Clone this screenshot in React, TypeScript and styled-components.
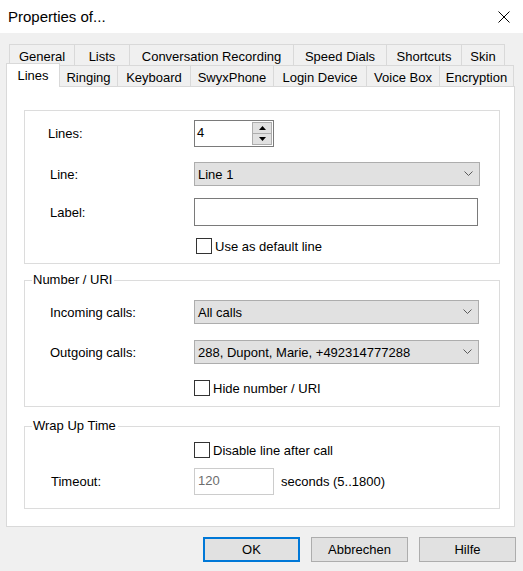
import styled, { createGlobalStyle } from 'styled-components';

const GlobalStyle = createGlobalStyle`
	html, body {
		margin: 0;
		padding: 0;
		background: #f0f0f0;
	}
	body {
		font-family: "Liberation Sans", Arial, sans-serif;
		font-size: 13px;
		color: #000;
	}
	* {
		box-sizing: border-box;
	}
`

const Window = styled.div`
	width: 523px;
	height: 571px;
	background: #f0f0f0;
	display: flex;
	flex-direction: column;
	overflow: hidden;
`

const TitleBar = styled.div`
	height: 33px;
	flex-shrink: 0;
	background: #fff;
	display: flex;
	align-items: center;
	justify-content: space-between;
	padding: 0 13px 0 8px;
	font-size: 15px;
`

const CloseButton = styled.div`
	display: flex;
	align-items: center;
`

const TabArea = styled.div`
	margin-top: 11px;
	display: flex;
	flex-direction: column;
`

const TabRow = styled.div<{ $indent: number }>`
	display: flex;
	height: 21px;
	padding-left: ${(props) => props.$indent}px;
`

const Tab = styled.div<{ $w: number; $active?: boolean }>`
	width: ${(props) => props.$w}px;
	height: ${(props) => (props.$active ? '24px' : '21px')};
	margin-top: ${(props) => (props.$active ? '-2px' : '0')};
	margin-right: -1px;
	border: 1px solid #d9d9d9;
	border-bottom: none;
	background: ${(props) => (props.$active ? '#fff' : '#f0f0f0')};
	display: flex;
	align-items: center;
	justify-content: center;
	padding-top: ${(props) => (props.$active ? '0' : '2px')};
	white-space: nowrap;
	position: relative;
	z-index: ${(props) => (props.$active ? 2 : 1)};
`

const Panel = styled.div`
	margin: 0 8px 0 6px;
	height: 441px;
	background: #fff;
	border: 1px solid #d9d9d9;
	padding: 23px 14px 0 17px;
	display: flex;
	flex-direction: column;
`

const Group = styled.div<{ $top: number; $bottom: number }>`
	position: relative;
	margin-top: ${(props) => props.$top}px;
	padding: 0 0 ${(props) => props.$bottom}px 25px;
	border: 1px solid #dcdcdc;
	display: flex;
	flex-direction: column;
`

const Caption = styled.div`
	position: absolute;
	top: -9px;
	left: 7px;
	padding: 0 2px 0 1px;
	background: #fff;
	line-height: 16px;
`

const Row = styled.div<{ $top: number; $h: number }>`
	display: flex;
	align-items: center;
	margin-top: ${(props) => props.$top}px;
	height: ${(props) => props.$h}px;
`

const Label = styled.div<{ $shift?: number }>`
	width: 144px;
	flex-shrink: 0;
	margin-left: ${(props) => props.$shift ?? 0}px;
	margin-right: ${(props) => -(props.$shift ?? 0)}px;
`

const SpinBox = styled.div`
	width: 80px;
	height: 27px;
	border: 1px solid #7a7a7a;
	display: flex;
	justify-content: space-between;
	padding: 1px;
`

const SpinValue = styled.div`
	padding: 3px 0 0 1px;
`

const SpinButtons = styled.div`
	width: 20px;
	display: flex;
	flex-direction: column;
`

const SpinButton = styled.div`
	flex: 1;
	background: #e1e1e1;
	border: 1px solid #adadad;
	display: flex;
	align-items: center;
	justify-content: center;
	& + & {
		border-top: none;
	}
`

const Combo = styled.div<{ $w: number }>`
	width: ${(props) => props.$w}px;
	height: 100%;
	background: #e1e1e1;
	border: 1px solid #adadad;
	display: flex;
	align-items: center;
	justify-content: space-between;
	padding: 0 6px 0 3px;
	white-space: nowrap;
`

const TextField = styled.div<{ $w: number; $disabled?: boolean }>`
	width: ${(props) => props.$w}px;
	height: 100%;
	background: #fff;
	border: 1px solid ${(props) => (props.$disabled ? '#cccccc' : '#7a7a7a')};
	color: ${(props) => (props.$disabled ? '#6d6d6d' : '#000')};
	padding: 4px 0 0 3px;
`

const CheckRow = styled.div<{ $shift?: number }>`
	display: flex;
	align-items: center;
	margin-left: ${(props) => props.$shift ?? 0}px;
`

const CheckBox = styled.div`
	width: 16px;
	height: 16px;
	border: 1px solid #333;
	background: #fff;
	margin-right: 3px;
`

const Unit = styled.div`
	margin-left: 7px;
`

const ButtonBar = styled.div`
	display: flex;
	justify-content: flex-end;
	gap: 11px;
	padding: 10px 7px 0 0;
`

const Button = styled.div<{ $default?: boolean }>`
	width: 97px;
	height: 25px;
	background: #e1e1e1;
	border: ${(props) => (props.$default ? '2px solid #0078d7' : '1px solid #adadad')};
	display: flex;
	align-items: center;
	justify-content: center;
`

const Chevron = () => (
	<svg width="9" height="6" viewBox="0 0 9 6">
		<polyline points="0.5,0.5 4.5,4.5 8.5,0.5" fill="none" stroke="#5a5a5a" strokeWidth="1" />
	</svg>
)

const Arrow = ({ up }: { up?: boolean }) => (
	<svg width="7" height="4" viewBox="0 0 7 4">
		<polygon points={up ? '0,4 7,4 3.5,0' : '0,0 7,0 3.5,4'} fill="#000" />
	</svg>
)

const topTabs = [
	{ label: 'General', w: 66 },
	{ label: 'Lists', w: 56 },
	{ label: 'Conversation Recording', w: 165 },
	{ label: 'Speed Dials', w: 94 },
	{ label: 'Shortcuts', w: 76 },
	{ label: 'Skin', w: 44 },
]

const bottomTabs = [
	{ label: 'Lines', w: 54, active: true },
	{ label: 'Ringing', w: 59 },
	{ label: 'Keyboard', w: 74 },
	{ label: 'SwyxPhone', w: 84 },
	{ label: 'Login Device', w: 94 },
	{ label: 'Voice Box', w: 74 },
	{ label: 'Encryption', w: 75 },
]

function App() {
	return (
		<Window>
			<GlobalStyle />
			<TitleBar>
				<span>Properties of...</span>
				<CloseButton>
					<svg width="12" height="12" viewBox="0 0 12 12">
						<path d="M0.5 0.5 L11.5 11.5 M11.5 0.5 L0.5 11.5" stroke="#000" strokeWidth="1" />
					</svg>
				</CloseButton>
			</TitleBar>

			<TabArea>
				<TabRow $indent={9}>
					{topTabs.map((t) => (
						<Tab key={t.label} $w={t.w}>{t.label}</Tab>
					))}
				</TabRow>
				<TabRow $indent={6}>
					{bottomTabs.map((t) => (
						<Tab key={t.label} $w={t.w} $active={t.active}>{t.label}</Tab>
					))}
				</TabRow>
			</TabArea>

			<Panel>
				<Group $top={0} $bottom={9}>
					<Row $top={9} $h={27}>
						<Label $shift={-2}>Lines:</Label>
						<SpinBox>
							<SpinValue>4</SpinValue>
							<SpinButtons>
								<SpinButton><Arrow up /></SpinButton>
								<SpinButton><Arrow /></SpinButton>
							</SpinButtons>
						</SpinBox>
					</Row>
					<Row $top={15} $h={24}>
						<Label>Line:</Label>
						<Combo $w={286}>
							<span>Line 1</span>
							<Chevron />
						</Combo>
					</Row>
					<Row $top={12} $h={28}>
						<Label>Label:</Label>
						<TextField $w={284} />
					</Row>
					<Row $top={12} $h={16}>
						<Label />
						<CheckRow $shift={2}>
							<CheckBox />
							<span>Use as default line</span>
						</CheckRow>
					</Row>
				</Group>

				<Group $top={16} $bottom={10}>
					<Caption>Number / URI</Caption>
					<Row $top={19} $h={24}>
						<Label>Incoming calls:</Label>
						<Combo $w={285}>
							<span>All calls</span>
							<Chevron />
						</Combo>
					</Row>
					<Row $top={16} $h={24}>
						<Label>Outgoing calls:</Label>
						<Combo $w={285}>
							<span>288, Dupont, Marie, +492314777288</span>
							<Chevron />
						</Combo>
					</Row>
					<Row $top={16} $h={16}>
						<Label />
						<CheckRow>
							<CheckBox />
							<span>Hide number / URI</span>
						</CheckRow>
					</Row>
				</Group>

				<Group $top={19} $bottom={13}>
					<Caption>Wrap Up Time</Caption>
					<Row $top={15} $h={16}>
						<Label />
						<CheckRow>
							<CheckBox />
							<span>Disable line after call</span>
						</CheckRow>
					</Row>
					<Row $top={10} $h={27}>
						<Label $shift={1}>Timeout:</Label>
						<TextField $w={80} $disabled>120</TextField>
						<Unit>seconds (5..1800)</Unit>
					</Row>
				</Group>
			</Panel>

			<ButtonBar>
				<Button $default>OK</Button>
				<Button>Abbrechen</Button>
				<Button>Hilfe</Button>
			</ButtonBar>
		</Window>
	)
}

export default App
